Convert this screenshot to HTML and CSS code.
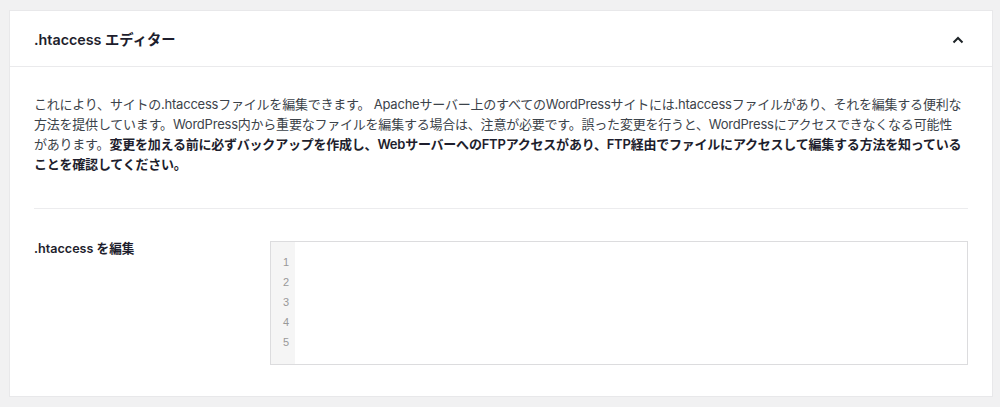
FILE: index.html
```html
<!DOCTYPE html>
<html lang="ja">
<head>
<meta charset="utf-8">
<link rel="stylesheet" href="styles.css">
</head>
<body>
<section class="card">
  <header class="card-header">
    <h2 class="title">.htaccess エディター</h2>
    <svg class="chevron" width="12" height="8" viewBox="0 0 12 8"><path d="M1.5 6.5 L6 2 L10.5 6.5" fill="none" stroke="#1d2327" stroke-width="2"/></svg>
  </header>
  <div class="card-body">
    <p class="desc">これにより、サイトの.htaccessファイルを編集できます。 Apacheサーバー上のすべてのWordPressサイトには.htaccessファイルがあり、それを編集する便利な<br>方法を提供しています。WordPress内から重要なファイルを編集する場合は、注意が必要です。誤った変更を行うと、WordPressにアクセスできなくなる可能性<br>があります。<strong>変更を加える前に必ずバックアップを作成し、WebサーバーへのFTPアクセスがあり、FTP経由でファイルにアクセスして編集する方法を知っている<br>ことを確認してください。</strong></p>
    <hr class="divider">
    <div class="field">
      <label class="field-label">.htaccess を編集</label>
      <div class="editor">
        <div class="gutter">
          <span>1</span><span>2</span><span>3</span><span>4</span><span>5</span>
        </div>
        <div class="code"></div>
      </div>
    </div>
  </div>
</section>
</body>
</html>
```
FILE: styles.css
```css
* { box-sizing: border-box; }
body {
  margin: 0;
  background: #f1f1f2;
  font-family: Inter, "Noto Sans CJK JP", sans-serif;
  color: #3c434a;
}
.card {
  margin: 11px 8px 10px 10px;
  background: #fff;
  box-shadow: 0 0 0 1px #e8e8ea;
}
.card-header {
  height: 56px;
  padding: 0 28px 0 24px;
  display: flex;
  align-items: center;
  justify-content: space-between;
  border-bottom: 1px solid #eaeaec;
}
.title {
  margin: 0;
  font-size: 14.3px;
  font-weight: 600;
  color: #1e1e2d;
}
.chevron { display: block; margin-top: 2px; }
.card-body {
  padding: 27px 24px 31px 24px;
}
.desc {
  margin: 0;
  font-size: 13px;
  line-height: 20px;
  color: #3c434a;
  white-space: nowrap;
  letter-spacing: -0.22px;
}
.desc strong {
  font-weight: 600;
  color: #1e1e2d;
}
.divider {
  border: 0;
  border-top: 1px solid #ececee;
  margin: 34px 0 32px 0;
}
.field {
  display: flex;
}
.field-label {
  width: 236px;
  font-size: 12.6px;
  font-weight: 600;
  color: #1e1e2d;
  line-height: 20px;
  margin-top: -2px;
}
.editor {
  flex: 1;
  display: flex;
  border: 1px solid #dcdcde;
  height: 124px;
}
.gutter {
  width: 24px;
  background: #f5f5f5;
  padding: 10px 6px 0 0;
  display: flex;
  flex-direction: column;
  align-items: flex-end;
  font-family: "Liberation Sans", Arial, sans-serif;
  font-size: 11px;
  line-height: 20px;
  color: #999;
}
.code { flex: 1; }
```
